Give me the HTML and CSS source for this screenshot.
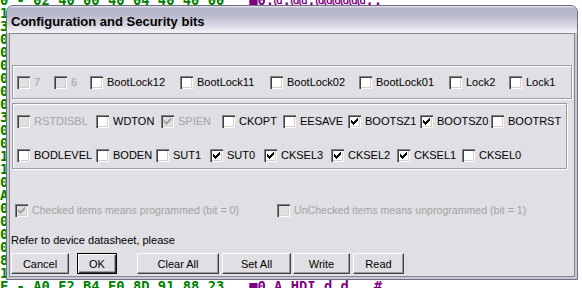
FILE: index.html
```html
<!DOCTYPE html>
<html lang="en">
  <head>
    <meta charset="UTF-8" />
    <title>Configuration and Security bits</title>
    <link rel="stylesheet" href="styles.css">
  </head>
  <body>
    <pre class="dump">0 - 02 40 00 40 04 40 40 00   <span class="asc">■0.@.@@.@@@@@@..</span>
1
3
0
0
0
0
0
0
3
0
0
1
1
0
A
0
0
0
0
8
1
F - A0 E2 B4 E0 8D 91 88 23   <span class="asc">■0.A.HDI d d. .#</span></pre>

    <div class="window">
      <div class="titlebar">Configuration and Security bits</div>
      <div class="client">
        <div class="group locks">
          <label class="chk disabled"><span class="box"></span>7</label>
          <label class="chk disabled"><span class="box"></span>6</label>
          <label class="chk"><span class="box"></span>BootLock12</label>
          <label class="chk"><span class="box"></span>BootLock11</label>
          <label class="chk"><span class="box"></span>BootLock02</label>
          <label class="chk"><span class="box"></span>BootLock01</label>
          <label class="chk"><span class="box"></span>Lock2</label>
          <label class="chk"><span class="box"></span>Lock1</label>
        </div>

        <div class="group fuses">
          <div class="fuse-row high">
            <label class="chk disabled"><span class="box"></span>RSTDISBL</label>
            <label class="chk"><span class="box"></span>WDTON</label>
            <label class="chk disabled"><span class="box"><svg viewBox="0 0 13 13"><path d="M3 5h1v1h1v1h1v-1h1v-1h1v-1h1v-1h1v3h-1v1h-1v1h-1v1h-1v1h-1v-1h-1v-1h-1z"/></svg></span>SPIEN</label>
            <label class="chk"><span class="box"></span>CKOPT</label>
            <label class="chk"><span class="box"></span>EESAVE</label>
            <label class="chk"><span class="box"><svg viewBox="0 0 13 13"><path d="M3 5h1v1h1v1h1v-1h1v-1h1v-1h1v-1h1v3h-1v1h-1v1h-1v1h-1v1h-1v-1h-1v-1h-1z"/></svg></span>BOOTSZ1</label>
            <label class="chk"><span class="box"><svg viewBox="0 0 13 13"><path d="M3 5h1v1h1v1h1v-1h1v-1h1v-1h1v-1h1v3h-1v1h-1v1h-1v1h-1v1h-1v-1h-1v-1h-1z"/></svg></span>BOOTSZ0</label>
            <label class="chk"><span class="box"></span>BOOTRST</label>
          </div>
          <div class="fuse-row low">
            <label class="chk"><span class="box"></span>BODLEVEL</label>
            <label class="chk"><span class="box"></span>BODEN</label>
            <label class="chk"><span class="box"></span>SUT1</label>
            <label class="chk"><span class="box"><svg viewBox="0 0 13 13"><path d="M3 5h1v1h1v1h1v-1h1v-1h1v-1h1v-1h1v3h-1v1h-1v1h-1v1h-1v1h-1v-1h-1v-1h-1z"/></svg></span>SUT0</label>
            <label class="chk"><span class="box"><svg viewBox="0 0 13 13"><path d="M3 5h1v1h1v1h1v-1h1v-1h1v-1h1v-1h1v3h-1v1h-1v1h-1v1h-1v1h-1v-1h-1v-1h-1z"/></svg></span>CKSEL3</label>
            <label class="chk"><span class="box"><svg viewBox="0 0 13 13"><path d="M3 5h1v1h1v1h1v-1h1v-1h1v-1h1v-1h1v3h-1v1h-1v1h-1v1h-1v1h-1v-1h-1v-1h-1z"/></svg></span>CKSEL2</label>
            <label class="chk"><span class="box"><svg viewBox="0 0 13 13"><path d="M3 5h1v1h1v1h1v-1h1v-1h1v-1h1v-1h1v3h-1v1h-1v1h-1v1h-1v1h-1v-1h-1v-1h-1z"/></svg></span>CKSEL1</label>
            <label class="chk"><span class="box"></span>CKSEL0</label>
          </div>
        </div>

        <div class="notes">
          <label class="chk disabled"><span class="box"><svg viewBox="0 0 13 13"><path d="M3 5h1v1h1v1h1v-1h1v-1h1v-1h1v-1h1v3h-1v1h-1v1h-1v1h-1v1h-1v-1h-1v-1h-1z"/></svg></span>Checked items means programmed (bit = 0)</label>
          <label class="chk disabled"><span class="box"></span>UnChecked items means unprogrammed (bit = 1)</label>
        </div>

        <p class="hint">Refer to device datasheet, please</p>

        <div class="buttons">
          <button class="btn btn-cancel">Cancel</button>
          <button class="btn btn-ok">OK</button>
          <button class="btn btn-clear">Clear All</button>
          <button class="btn btn-set">Set All</button>
          <button class="btn btn-write">Write</button>
          <button class="btn btn-read">Read</button>
        </div>
      </div>
    </div>
  </body>
</html>
```

FILE: styles.css
```css
html,
body {
  margin: 0;
  height: 100%;
  overflow: hidden;
  background-color: #fff;
}

/* hex dump behind the dialog */
.dump {
  margin: -6px 0 0;
  font: bold 13.8px/13px "DejaVu Sans Mono", monospace;
  color: #008000;
}
.dump .asc {
  color: #800080;
}

/* dialog window */
.window {
  position: absolute;
  left: 6px;
  top: 5px;
  width: 572px;
  height: 275px;
  box-sizing: border-box;
  display: flex;
  flex-direction: column;
  border: 1px solid #6f6f84;
  border-radius: 7px 7px 0 0;
  background-color: #c8c8d6;
  font: 11px "Liberation Sans", Arial, sans-serif;
  color: #000;
}
.titlebar {
  height: 27px;
  box-sizing: border-box;
  padding: 4px 0 0 4px;
  line-height: 23px;
  font-size: 13px;
  font-weight: bold;
  border-radius: 6px 6px 0 0;
  background: linear-gradient(
    #ececf2 0%,
    #b4b4c8 8%,
    #babacd 35%,
    #d6d6e2 70%,
    #f4f4f8 100%
  );
}
.client {
  flex: 1;
  margin: 0 2px 2px;
  padding: 31px 0 0 1px;
  border: 1px solid #85859a;
  background-color: #e0dfe3;
}

/* group boxes */
.group {
  box-sizing: border-box;
  margin-left: 1px;
  border: 1px solid #9c9ca6;
  box-shadow: inset 1px 1px #fff, 1px 1px #fff;
}
.locks {
  width: 560px;
  height: 34px;
  padding-left: 4px;
  display: grid;
  grid-template-columns: 37px 36px 90px 90px 89px 90px 60px auto;
  align-items: center;
}
.fuses {
  width: 555px;
  height: 66px;
  margin-top: 4px;
}
.fuse-row {
  height: 34px;
  padding-left: 4px;
  display: grid;
  align-items: center;
}
.fuse-row.high {
  grid-template-columns: 79px 65px 61px 61px 65px 72px 71px auto;
}
.fuse-row.low {
  grid-template-columns: 79px 60px 54px 54px 67px 66px 65px auto;
}

/* check boxes */
.chk {
  display: flex;
  align-items: center;
  gap: 4px;
  white-space: nowrap;
}
.chk .box {
  flex: none;
  width: 13px;
  height: 13px;
  background-color: #fff;
  color: #000;
  box-shadow: inset 1px 1px #808080, inset 2px 2px #404040,
    inset -1px -1px #fff, inset -2px -2px #d4d0c8;
}
.chk .box svg {
  display: block;
  width: 13px;
  height: 13px;
  fill: currentColor;
}
.chk.disabled {
  color: #a3a3a3;
}
.chk.disabled .box {
  background-color: #e0dfe3;
  color: #a3a3a3;
}

.notes {
  margin-top: 31px;
  height: 20px;
  padding-left: 4px;
  display: grid;
  grid-template-columns: 262px auto;
  align-items: center;
  font-size: 10.6px;
}
.hint {
  margin: 12px 0 0;
  line-height: 16px;
}

/* buttons */
.buttons {
  display: flex;
  margin-top: 5px;
}
.btn {
  height: 21px;
  box-sizing: border-box;
  padding: 0;
  border: 1px solid;
  border-color: #fff #404040 #404040 #fff;
  box-shadow: inset -1px -1px #9d9da1;
  background-color: #e0dfe3;
  font: 11px "Liberation Sans", Arial, sans-serif;
  color: #000;
}
.btn-ok {
  border-color: #000;
  box-shadow: inset 1px 1px #fff, inset -1px -1px #404040,
    inset -2px -2px #9d9da1;
}
.btn-cancel {
  width: 58px;
}
.btn-ok {
  width: 40px;
  margin-left: 8px;
}
.btn-clear {
  width: 82px;
  margin-left: 20px;
}
.btn-set {
  width: 69px;
  margin-left: 3px;
}
.btn-write {
  width: 57px;
  margin-left: 2px;
}
.btn-read {
  width: 51px;
  margin-left: 3px;
}
```
